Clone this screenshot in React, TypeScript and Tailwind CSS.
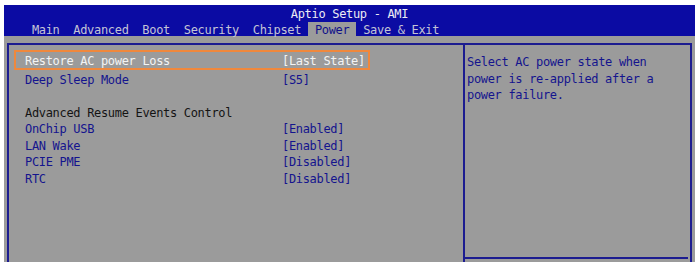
import React from "react";

const font = { fontFamily: '"DejaVu Sans Mono", "Liberation Mono", monospace' };

const rows: { label: string; value?: string; kind: "sel" | "item" | "head" | "blank" }[] = [
  { label: "Restore AC power Loss", value: "[Last State]", kind: "sel" },
  { label: "Deep Sleep Mode", value: "[S5]", kind: "item" },
  { label: "", kind: "blank" },
  { label: "Advanced Resume Events Control", kind: "head" },
  { label: "OnChip USB", value: "[Enabled]", kind: "item" },
  { label: "LAN Wake", value: "[Enabled]", kind: "item" },
  { label: "PCIE PME", value: "[Disabled]", kind: "item" },
  { label: "RTC", value: "[Disabled]", kind: "item" },
];

const tabs = ["Main", "Advanced", "Boot", "Security", "Chipset", "Power", "Save & Exit"];

export default function App() {
  return (
    <div className="w-[700px] h-[269px] bg-white pt-[5px] pl-[4px] text-[12px] tracking-[-0.32px]" style={font}>
      <div className="w-[691px] h-[257px] bg-[#9b9b9b] flex flex-col">
        <div className="h-[31px] bg-[#0b0ba3] flex flex-col shrink-0">
          <div className="h-[16px] leading-[16px] pt-[1px] text-center text-[#ececf4] whitespace-pre">Aptio Setup - AMI</div>
          <div className="flex mt-[1px] pl-[21px] h-[15px]">
            {tabs.map((t) =>
              t === "Power" ? (
                <span key={t} className="px-[6.9px] h-[15px] leading-[15px] pt-[1px] bg-[#9b9b9b] text-[#10108a] whitespace-pre">
                  {t}
                </span>
              ) : (
                <span key={t} className="px-[6.9px] h-[15px] leading-[15px] pt-[1px] text-[#c4c4d6] whitespace-pre">
                  {t}
                </span>
              )
            )}
          </div>
        </div>
        <div className="flex-1 pl-[3px] pt-[7px] flex">
          <div className="w-[685px] border-l-2 border-t-2 border-r-2 border-[#1c1c90] flex">
            <div className="w-[454px] pt-[5px] pl-[5px]">
              {rows.map((r, i) =>
                r.kind === "sel" ? (
                  <div key={i} className="w-[356px] h-[20px] border-2 border-[#f0883c] pl-[9px] pt-[2px] flex items-center text-[#f4f4f4]">
                    <span className="w-[257px] whitespace-pre">{r.label}</span>
                    <span className="whitespace-pre">{r.value}</span>
                  </div>
                ) : (
                  <div
                    key={i}
                    className={
                      "h-[16.5px] pl-[11px] pt-[3px] flex items-center " +
                      (r.kind === "head" ? "text-[#141414]" : "text-[#14148e]")
                    }
                  >
                    <span className="w-[257px] whitespace-pre">{r.label}</span>
                    {r.value && <span className="whitespace-pre">{r.value}</span>}
                  </div>
                )
              )}
            </div>
            <div className="w-[2px] bg-[#1c1c90]" />
            <div className="flex-1 flex flex-col">
              <div className="flex-1 pt-[9px] pl-[2px] text-[#14148e] leading-[16.5px]">
                <div className="whitespace-pre">Select AC power state when</div>
                <div className="whitespace-pre">power is re-applied after a</div>
                <div className="whitespace-pre">power failure.</div>
              </div>
              <div className="h-[2px] bg-[#1c1c90] mr-[2px] mb-[3px]" />
            </div>
          </div>
        </div>
      </div>
    </div>
  );
}
